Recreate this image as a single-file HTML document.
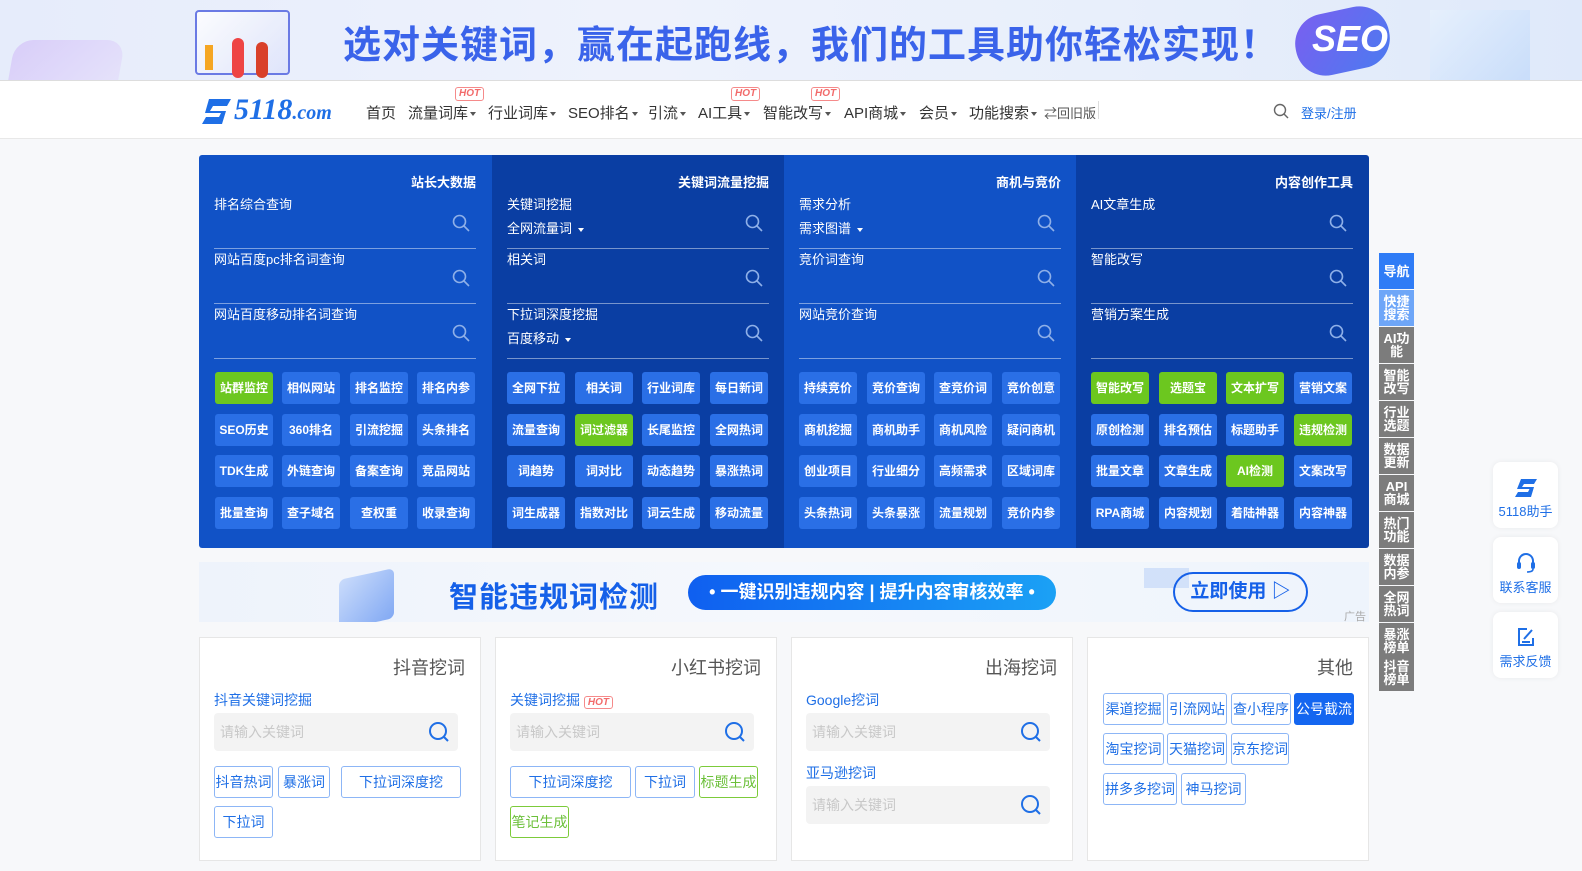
<!DOCTYPE html>
<html><head><meta charset="utf-8"><style>
*{margin:0;padding:0;box-sizing:border-box}
body{width:1582px;height:871px;overflow:hidden;background:#f7f8fa;font-family:"Liberation Sans","Noto Sans CJK SC",sans-serif;position:relative}
.abs{position:absolute}
.banner{left:0;top:0;width:1582px;height:80px;background:linear-gradient(90deg,#e6ecfb,#eef2fc 40%,#e8effb 70%,#dfe9fa);overflow:hidden}
.banner .t{left:343px;top:14px;font-size:38px;font-weight:bold;color:#3a63ea;letter-spacing:1px;white-space:nowrap}
.nav{left:0;top:80px;width:1582px;height:59px;background:#fff;border-top:1px solid #ddd;border-bottom:1px solid #e8e8e8}
.nav .m{top:21px;font-size:15px;color:#333;white-space:nowrap}
.tri{display:inline-block;border-left:3.5px solid transparent;border-right:3.5px solid transparent;border-top:4px solid #555;vertical-align:middle;margin-left:2px}
.hot{font-size:10px;font-style:italic;font-weight:bold;color:#f26b6b;border:1px solid #f58a8a;border-radius:3px;padding:0 3px;line-height:12px}
.col{top:155px;width:293px;height:393px}
.col .h{position:absolute;right:16px;top:17px;font-size:13px;font-weight:bold;color:#fff}
.sr{position:absolute;left:15px;width:262px;height:55px;border-bottom:1px solid rgba(255,255,255,.45)}
.sr .l{position:absolute;left:0;top:0;font-size:13px;color:#fff}
.sr .s{position:absolute;left:0;top:24px;font-size:13px;color:#fff}
.sr .s .tri{border-top-color:#fff}
.sr svg{position:absolute;right:6px;top:20px}
.b{position:absolute;width:58px;height:32px;border-radius:3px;background:#2a6fe6;color:#fff;font-size:12px;font-weight:bold;text-align:center;line-height:32px}
.b.g{background:#6cc71f}
.card{top:637px;width:282px;height:224px;background:#fff;border:1px solid #e6e6e6}
.card .h{position:absolute;right:15px;top:16px;font-size:18px;color:#555}
.card .lb{position:absolute;left:14px;font-size:14px;color:#1f6fe6}
.inp{position:absolute;left:14px;width:244px;height:38px;background:#f3f3f3;border-radius:4px;font-size:14px;color:#c8c8c8;padding:9px 6px}
.inp svg{position:absolute;right:8px;top:8px}
.tg{position:absolute;height:32px;border:1px solid #8db6f6;border-radius:3px;color:#1f6fe6;font-size:14px;text-align:center;line-height:30px;background:#fff}
.tg.gr{border-color:#7ccb3a;color:#6cc03a}
.tg.on{background:#1466f0;border-color:#1466f0;color:#fff}
.sd{left:1379px;width:35px;height:36px;background:#7c7c7c;color:#fff;font-size:13px;line-height:13px;text-align:center;display:flex;align-items:center;justify-content:center;font-weight:bold}
.fl{left:1493px;width:65px;height:66px;background:#fff;border-radius:8px;box-shadow:0 0 6px rgba(0,0,0,.06);text-align:center;color:#1f6fe6;font-size:13px}
</style></head><body>
<div class="abs banner">
 <div class="abs" style="left:10px;top:40px;width:110px;height:60px;border-radius:18px;background:linear-gradient(135deg,#d5c6f8,#e6e2fb);opacity:.8;transform:skewX(-10deg)"></div>
 <div class="abs" style="left:195px;top:10px;width:95px;height:65px;background:linear-gradient(135deg,#fff,#dde3fb);border:2px solid #5566e0;border-radius:4px;opacity:.85"></div>
 <div class="abs" style="left:205px;top:45px;width:8px;height:25px;background:#f5a623"></div>
 <div class="abs" style="left:232px;top:38px;width:12px;height:40px;background:#e44;border-radius:6px"></div>
 <div class="abs" style="left:256px;top:42px;width:12px;height:36px;background:#d9402a;border-radius:6px"></div>
 <div class="abs t">选对关键词，赢在起跑线，我们的工具助你轻松实现！</div>
 <div class="abs" style="left:1295px;top:10px;width:95px;height:62px;background:linear-gradient(135deg,#7a5ff0,#4b7bf0);border-radius:30px;transform:rotate(-12deg)"></div>
 <div class="abs" style="left:1312px;top:18px;font-size:36px;font-weight:bold;color:#fff;font-style:italic">SEO</div>
 <div class="abs" style="left:1430px;top:10px;width:100px;height:70px;background:linear-gradient(135deg,#e7f1fd,#c3dafa);opacity:.8"></div>
</div>
<div class="abs nav">
 <svg class="abs" style="left:199px;top:16px" width="36" height="30" viewBox="0 0 36 30"><path d="M10 2h22l-4 7H14l-3 5h16l-4 13H3l4-7h13l2-4H6l4-14z" fill="#1f6fe6"/></svg>
 <div class="abs" style="left:234px;top:12px;font-size:30px;font-weight:bold;font-style:italic;color:#1f6fe6;font-family:'Liberation Serif',serif;white-space:nowrap">5118<span style="font-size:20px">.com</span></div>
 <div class="abs m" style="left:366px">首页</div>
 <div class="abs m" style="left:408px">流量词库<span class="tri"></span></div>
 <div class="abs hot" style="left:455px;top:6px">HOT</div>
 <div class="abs m" style="left:488px">行业词库<span class="tri"></span></div>
 <div class="abs m" style="left:568px">SEO排名<span class="tri"></span></div>
 <div class="abs m" style="left:648px">引流<span class="tri"></span></div>
 <div class="abs m" style="left:698px">AI工具<span class="tri"></span></div>
 <div class="abs hot" style="left:731px;top:6px">HOT</div>
 <div class="abs m" style="left:763px">智能改写<span class="tri"></span></div>
 <div class="abs hot" style="left:811px;top:6px">HOT</div>
 <div class="abs m" style="left:844px">API商城<span class="tri"></span></div>
 <div class="abs m" style="left:919px">会员<span class="tri"></span></div>
 <div class="abs m" style="left:969px">功能搜索<span class="tri"></span></div>
 <div class="abs m" style="left:1044px;font-size:13px;top:22px;color:#555">⇄回旧版</div>
 <div class="abs" style="left:1098px;top:20px;width:1px;height:18px;background:#ddd"></div>
 <svg class="abs" style="left:1273px;top:22px" width="16" height="16" viewBox="0 0 16 16"><circle cx="7" cy="7" r="5.5" fill="none" stroke="#666" stroke-width="1.4"/><path d="M11 11l4 4" stroke="#666" stroke-width="1.4"/></svg>
 <div class="abs m" style="left:1301px;font-size:13px;top:22px;color:#1f6fe6">登录/注册</div>
</div>

<div class="abs col" style="left:199px;background:#1152c6;border-radius:3px 0 0 3px"><div class="h">站长大数据</div>
 <div class="sr" style="top:39px"><div class="l">排名综合查询</div><svg width="18" height="18" viewBox="0 0 18 18"><circle cx="7.5" cy="7.5" r="6" fill="none" stroke="#8fb0e8" stroke-width="1.6"/><path d="M12 12l5 5" stroke="#8fb0e8" stroke-width="1.6"/></svg></div>
 <div class="sr" style="top:94px"><div class="l">网站百度pc排名词查询</div><svg width="18" height="18" viewBox="0 0 18 18"><circle cx="7.5" cy="7.5" r="6" fill="none" stroke="#8fb0e8" stroke-width="1.6"/><path d="M12 12l5 5" stroke="#8fb0e8" stroke-width="1.6"/></svg></div>
 <div class="sr" style="top:149px"><div class="l">网站百度移动排名词查询</div><svg width="18" height="18" viewBox="0 0 18 18"><circle cx="7.5" cy="7.5" r="6" fill="none" stroke="#8fb0e8" stroke-width="1.6"/><path d="M12 12l5 5" stroke="#8fb0e8" stroke-width="1.6"/></svg></div>
</div>
<div class="abs col" style="left:492px;background:#0a3ea3"><div class="h">关键词流量挖掘</div>
 <div class="sr" style="top:39px"><div class="l">关键词挖掘</div><div class="s">全网流量词 <span class="tri"></span></div><svg width="18" height="18" viewBox="0 0 18 18"><circle cx="7.5" cy="7.5" r="6" fill="none" stroke="#8fb0e8" stroke-width="1.6"/><path d="M12 12l5 5" stroke="#8fb0e8" stroke-width="1.6"/></svg></div>
 <div class="sr" style="top:94px"><div class="l">相关词</div><svg width="18" height="18" viewBox="0 0 18 18"><circle cx="7.5" cy="7.5" r="6" fill="none" stroke="#8fb0e8" stroke-width="1.6"/><path d="M12 12l5 5" stroke="#8fb0e8" stroke-width="1.6"/></svg></div>
 <div class="sr" style="top:149px"><div class="l">下拉词深度挖掘</div><div class="s">百度移动 <span class="tri"></span></div><svg width="18" height="18" viewBox="0 0 18 18"><circle cx="7.5" cy="7.5" r="6" fill="none" stroke="#8fb0e8" stroke-width="1.6"/><path d="M12 12l5 5" stroke="#8fb0e8" stroke-width="1.6"/></svg></div>
</div>
<div class="abs col" style="left:784px;background:#1152c6"><div class="h">商机与竞价</div>
 <div class="sr" style="top:39px"><div class="l">需求分析</div><div class="s">需求图谱 <span class="tri"></span></div><svg width="18" height="18" viewBox="0 0 18 18"><circle cx="7.5" cy="7.5" r="6" fill="none" stroke="#8fb0e8" stroke-width="1.6"/><path d="M12 12l5 5" stroke="#8fb0e8" stroke-width="1.6"/></svg></div>
 <div class="sr" style="top:94px"><div class="l">竞价词查询</div><svg width="18" height="18" viewBox="0 0 18 18"><circle cx="7.5" cy="7.5" r="6" fill="none" stroke="#8fb0e8" stroke-width="1.6"/><path d="M12 12l5 5" stroke="#8fb0e8" stroke-width="1.6"/></svg></div>
 <div class="sr" style="top:149px"><div class="l">网站竞价查询</div><svg width="18" height="18" viewBox="0 0 18 18"><circle cx="7.5" cy="7.5" r="6" fill="none" stroke="#8fb0e8" stroke-width="1.6"/><path d="M12 12l5 5" stroke="#8fb0e8" stroke-width="1.6"/></svg></div>
</div>
<div class="abs col" style="left:1076px;background:#0a3ea3;width:293px;border-radius:0 3px 3px 0"><div class="h">内容创作工具</div>
 <div class="sr" style="top:39px"><div class="l">AI文章生成</div><svg width="18" height="18" viewBox="0 0 18 18"><circle cx="7.5" cy="7.5" r="6" fill="none" stroke="#8fb0e8" stroke-width="1.6"/><path d="M12 12l5 5" stroke="#8fb0e8" stroke-width="1.6"/></svg></div>
 <div class="sr" style="top:94px"><div class="l">智能改写</div><svg width="18" height="18" viewBox="0 0 18 18"><circle cx="7.5" cy="7.5" r="6" fill="none" stroke="#8fb0e8" stroke-width="1.6"/><path d="M12 12l5 5" stroke="#8fb0e8" stroke-width="1.6"/></svg></div>
 <div class="sr" style="top:149px"><div class="l">营销方案生成</div><svg width="18" height="18" viewBox="0 0 18 18"><circle cx="7.5" cy="7.5" r="6" fill="none" stroke="#8fb0e8" stroke-width="1.6"/><path d="M12 12l5 5" stroke="#8fb0e8" stroke-width="1.6"/></svg></div>
</div>

<div class="abs" style="left:0;top:0">
<div class="b g" style="left:215px;top:372px">站群监控</div><div class="b" style="left:282px;top:372px">相似网站</div><div class="b" style="left:350px;top:372px">排名监控</div><div class="b" style="left:417px;top:372px">排名内参</div>
<div class="b" style="left:215px;top:414px">SEO历史</div><div class="b" style="left:282px;top:414px">360排名</div><div class="b" style="left:350px;top:414px">引流挖掘</div><div class="b" style="left:417px;top:414px">头条排名</div>
<div class="b" style="left:215px;top:455px">TDK生成</div><div class="b" style="left:282px;top:455px">外链查询</div><div class="b" style="left:350px;top:455px">备案查询</div><div class="b" style="left:417px;top:455px">竞品网站</div>
<div class="b" style="left:215px;top:497px">批量查询</div><div class="b" style="left:282px;top:497px">查子域名</div><div class="b" style="left:350px;top:497px">查权重</div><div class="b" style="left:417px;top:497px">收录查询</div>

<div class="b" style="left:507px;top:372px">全网下拉</div><div class="b" style="left:575px;top:372px">相关词</div><div class="b" style="left:642px;top:372px">行业词库</div><div class="b" style="left:710px;top:372px">每日新词</div>
<div class="b" style="left:507px;top:414px">流量查询</div><div class="b g" style="left:575px;top:414px">词过滤器</div><div class="b" style="left:642px;top:414px">长尾监控</div><div class="b" style="left:710px;top:414px">全网热词</div>
<div class="b" style="left:507px;top:455px">词趋势</div><div class="b" style="left:575px;top:455px">词对比</div><div class="b" style="left:642px;top:455px">动态趋势</div><div class="b" style="left:710px;top:455px">暴涨热词</div>
<div class="b" style="left:507px;top:497px">词生成器</div><div class="b" style="left:575px;top:497px">指数对比</div><div class="b" style="left:642px;top:497px">词云生成</div><div class="b" style="left:710px;top:497px">移动流量</div>

<div class="b" style="left:799px;top:372px">持续竞价</div><div class="b" style="left:867px;top:372px">竞价查询</div><div class="b" style="left:934px;top:372px">查竞价词</div><div class="b" style="left:1002px;top:372px">竞价创意</div>
<div class="b" style="left:799px;top:414px">商机挖掘</div><div class="b" style="left:867px;top:414px">商机助手</div><div class="b" style="left:934px;top:414px">商机风险</div><div class="b" style="left:1002px;top:414px">疑问商机</div>
<div class="b" style="left:799px;top:455px">创业项目</div><div class="b" style="left:867px;top:455px">行业细分</div><div class="b" style="left:934px;top:455px">高频需求</div><div class="b" style="left:1002px;top:455px">区域词库</div>
<div class="b" style="left:799px;top:497px">头条热词</div><div class="b" style="left:867px;top:497px">头条暴涨</div><div class="b" style="left:934px;top:497px">流量规划</div><div class="b" style="left:1002px;top:497px">竞价内参</div>

<div class="b g" style="left:1091px;top:372px">智能改写</div><div class="b g" style="left:1159px;top:372px">选题宝</div><div class="b g" style="left:1226px;top:372px">文本扩写</div><div class="b" style="left:1294px;top:372px">营销文案</div>
<div class="b" style="left:1091px;top:414px">原创检测</div><div class="b" style="left:1159px;top:414px">排名预估</div><div class="b" style="left:1226px;top:414px">标题助手</div><div class="b g" style="left:1294px;top:414px">违规检测</div>
<div class="b" style="left:1091px;top:455px">批量文章</div><div class="b" style="left:1159px;top:455px">文章生成</div><div class="b g" style="left:1226px;top:455px">AI检测</div><div class="b" style="left:1294px;top:455px">文案改写</div>
<div class="b" style="left:1091px;top:497px">RPA商城</div><div class="b" style="left:1159px;top:497px">内容规划</div><div class="b" style="left:1226px;top:497px">着陆神器</div><div class="b" style="left:1294px;top:497px">内容神器</div>
</div>

<div class="abs" style="left:199px;top:562px;width:1170px;height:60px;background:linear-gradient(90deg,#eef3fb,#f5f8fd 50%,#eef4fc);overflow:hidden">
 <div class="abs" style="left:140px;top:12px;width:55px;height:50px;background:linear-gradient(135deg,#c3d7fb,#6f9cf2);border-radius:6px;transform:skewY(-12deg);opacity:.85"></div>
 <div class="abs" style="left:250px;top:12px;font-size:29px;font-weight:bold;color:#1560e8;letter-spacing:1px">智能违规词检测</div>
 <div class="abs" style="left:489px;top:13px;width:368px;height:35px;border-radius:18px;background:linear-gradient(90deg,#0f5ff0,#1ba1f5);color:#fff;font-size:18px;font-weight:bold;line-height:35px;text-align:center">• 一键识别违规内容 | 提升内容审核效率 •</div>
 <div class="abs" style="left:945px;top:6px;width:45px;height:20px;background:#c5d8f8;opacity:.7"></div>
 <div class="abs" style="left:974px;top:10px;width:135px;height:40px;border:2px solid #1560e8;border-radius:20px;color:#1560e8;font-size:19px;font-weight:bold;line-height:36px;text-align:center">立即使用 ▷</div>
 <div class="abs" style="left:1145px;top:46px;font-size:11px;color:#aaa">广告</div>
</div>

<div class="abs card" style="left:199px"><div class="h">抖音挖词</div>
 <div class="lb" style="top:52px">抖音关键词挖掘</div>
 <div class="inp" style="top:75px">请输入关键词<svg width="22" height="22" viewBox="0 0 22 22"><circle cx="10" cy="10" r="8" fill="none" stroke="#1f6fe6" stroke-width="2"/><path d="M16 16l4 4" stroke="#1f6fe6" stroke-width="2"/></svg></div>
 <div class="tg" style="left:14px;top:128px;width:59px">抖音热词</div><div class="tg" style="left:78px;top:128px;width:52px">暴涨词</div><div class="tg" style="left:141px;top:128px;width:120px">下拉词深度挖</div>
 <div class="tg" style="left:14px;top:168px;width:59px">下拉词</div>
</div>
<div class="abs card" style="left:495px"><div class="h">小红书挖词</div>
 <div class="lb" style="top:52px">关键词挖掘 <span class="hot" style="font-size:10px">HOT</span></div>
 <div class="inp" style="top:75px">请输入关键词<svg width="22" height="22" viewBox="0 0 22 22"><circle cx="10" cy="10" r="8" fill="none" stroke="#1f6fe6" stroke-width="2"/><path d="M16 16l4 4" stroke="#1f6fe6" stroke-width="2"/></svg></div>
 <div class="tg" style="left:14px;top:128px;width:121px">下拉词深度挖</div><div class="tg" style="left:139px;top:128px;width:60px">下拉词</div><div class="tg gr" style="left:203px;top:128px;width:59px">标题生成</div>
 <div class="tg gr" style="left:14px;top:168px;width:59px">笔记生成</div>
</div>
<div class="abs card" style="left:791px"><div class="h">出海挖词</div>
 <div class="lb" style="top:52px">Google挖词</div>
 <div class="inp" style="top:75px">请输入关键词<svg width="22" height="22" viewBox="0 0 22 22"><circle cx="10" cy="10" r="8" fill="none" stroke="#1f6fe6" stroke-width="2"/><path d="M16 16l4 4" stroke="#1f6fe6" stroke-width="2"/></svg></div>
 <div class="lb" style="top:125px">亚马逊挖词</div>
 <div class="inp" style="top:148px">请输入关键词<svg width="22" height="22" viewBox="0 0 22 22"><circle cx="10" cy="10" r="8" fill="none" stroke="#1f6fe6" stroke-width="2"/><path d="M16 16l4 4" stroke="#1f6fe6" stroke-width="2"/></svg></div>
</div>
<div class="abs card" style="left:1087px"><div class="h">其他</div>
 <div class="tg" style="left:15px;top:55px;width:61px">渠道挖掘</div><div class="tg" style="left:79px;top:55px;width:60px">引流网站</div><div class="tg" style="left:143px;top:55px;width:60px">查小程序</div><div class="tg on" style="left:206px;top:55px;width:60px">公号截流</div>
 <div class="tg" style="left:15px;top:95px;width:61px">淘宝挖词</div><div class="tg" style="left:79px;top:95px;width:60px">天猫挖词</div><div class="tg" style="left:143px;top:95px;width:58px">京东挖词</div>
 <div class="tg" style="left:15px;top:135px;width:74px">拼多多挖词</div><div class="tg" style="left:93px;top:135px;width:65px">神马挖词</div>
</div>

<div class="abs sd" style="top:253px;background:#2f7cf6">导航</div>
<div class="abs sd" style="top:290px;background:#6ea6f8">快捷<br>搜索</div>
<div class="abs sd" style="top:327px">AI功<br>能</div>
<div class="abs sd" style="top:364px">智能<br>改写</div>
<div class="abs sd" style="top:401px">行业<br>选题</div>
<div class="abs sd" style="top:438px">数据<br>更新</div>
<div class="abs sd" style="top:475px">API<br>商城</div>
<div class="abs sd" style="top:512px">热门<br>功能</div>
<div class="abs sd" style="top:549px">数据<br>内参</div>
<div class="abs sd" style="top:586px">全网<br>热词</div>
<div class="abs sd" style="top:623px">暴涨<br>榜单</div>
<div class="abs sd" style="top:655px">抖音<br>榜单</div>

<div class="abs fl" style="top:462px"><svg style="margin-top:16px" width="24" height="20" viewBox="0 0 24 20"><path d="M7 1h16l-3 5H10l-2 3h12l-3 10H1l3-5h10l1.5-3H3z" fill="#1f6fe6"/></svg><div>5118助手</div></div>
<div class="abs fl" style="top:537px"><svg style="margin-top:13px" width="24" height="24" viewBox="0 0 24 24"><path d="M5 14v-3a7 7 0 0114 0v3" fill="none" stroke="#1f6fe6" stroke-width="2"/><rect x="3" y="12" width="4" height="7" rx="2" fill="#1f6fe6"/><rect x="17" y="12" width="4" height="7" rx="2" fill="#1f6fe6"/><path d="M19 19q0 3-6 3" fill="none" stroke="#1f6fe6" stroke-width="1.6"/></svg><div>联系客服</div></div>
<div class="abs fl" style="top:612px"><svg style="margin-top:14px" width="22" height="22" viewBox="0 0 22 22"><path d="M12 3H4v16h14v-7" fill="none" stroke="#1f6fe6" stroke-width="2"/><path d="M9 13l8-9" stroke="#1f6fe6" stroke-width="2"/><path d="M7 16h8" stroke="#1f6fe6" stroke-width="2"/></svg><div>需求反馈</div></div>
</body></html>
